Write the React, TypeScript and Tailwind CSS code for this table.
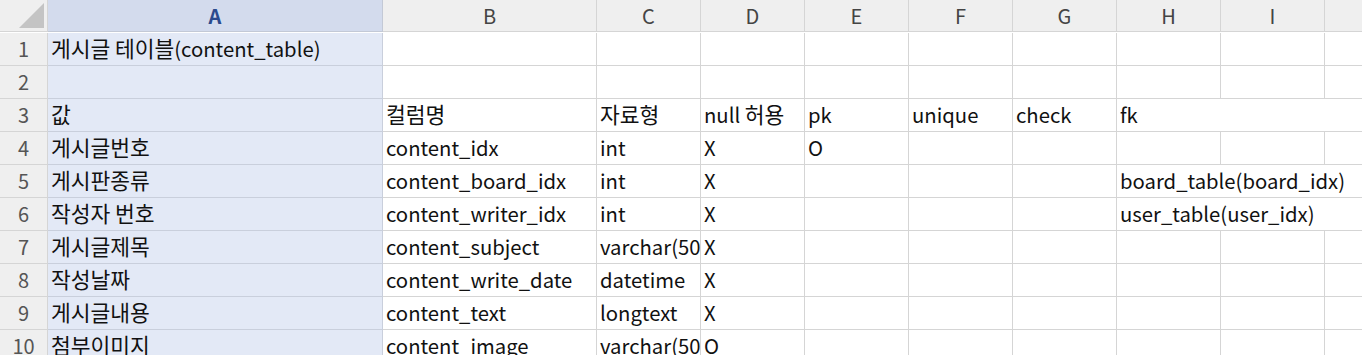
import React from "react";

type Cell = { text: string; span?: number };

const cols = ["A", "B", "C", "D", "E", "F", "G", "H", "I", "J"];

const rows: string[][] = [
  ["게시글 테이블(content_table)"],
  [],
  ["값", "컬럼명", "자료형", "null 허용", "pk", "unique", "check", "fk"],
  ["게시글번호", "content_idx", "int", "X", "O"],
  ["게시판종류", "content_board_idx", "int", "X", "", "", "", "board_table(board_idx)"],
  ["작성자 번호", "content_writer_idx", "int", "X", "", "", "", "user_table(user_idx)"],
  ["게시글제목", "content_subject", "varchar(500)", "X"],
  ["작성날짜", "content_write_date", "datetime", "X"],
  ["게시글내용", "content_text", "longtext", "X"],
  ["첨부이미지", "content_image", "varchar(500)", "O"],
];

// text that runs over the empty cells to its right (fk column)
function buildRow(r: string[]): Cell[] {
  const out: Cell[] = [];
  let i = 0;
  while (i < cols.length) {
    const text = r[i] ?? "";
    if (i === 7 && text) {
      out.push({ text, span: 3 });
      i += 3;
    } else {
      out.push({ text });
      i += 1;
    }
  }
  return out;
}

// hangul is drawn a bit larger than latin in the original sheet font
function CellText({ text }: { text: string }) {
  const parts = text.split(/([\uAC00-\uD7A3]+)/);
  return (
    <span>
      {parts.map((p, i) =>
        /[\uAC00-\uD7A3]/.test(p) ? (
          <span key={i} className="text-[21.5px]">
            {p}
          </span>
        ) : (
          p
        )
      )}
    </span>
  );
}

const font = { fontFamily: '"Noto Sans CJK KR", "Noto Sans", sans-serif' };

export default function App() {
  return (
    <div className="w-[1362px] h-[355px] overflow-hidden bg-white" style={font}>
      <div className="grid w-max grid-cols-[48px_335px_214px_repeat(8,104px)] auto-rows-[33px]">
        {/* header row */}
        <div className="h-[32px] bg-[#efefef] border-r border-b border-[#d5d5d5] relative">
          <div className="absolute left-[19px] top-[3px] w-[25px] h-[25px] bg-[#c4c4c4] [clip-path:polygon(100%_0,100%_100%,0_100%)]" />
        </div>
        {cols.map((c) =>
          c === "A" ? (
            <div
              key={c}
              className="h-[32px] bg-[#d3dbed] border-r border-b border-[#c3c9d6] flex items-center justify-center text-[20px] font-bold text-[#2b4a8d]"
            >
              {c}
            </div>
          ) : (
            <div
              key={c}
              className="h-[32px] bg-[#efefef] border-r border-b border-[#d5d5d5] flex items-center justify-center text-[20px] text-[#444]"
            >
              {c}
            </div>
          )
        )}

        {rows.map((r, ri) => (
          <React.Fragment key={ri}>
            <div className="bg-[#efefef] border-r border-b border-[#d5d5d5] flex items-center justify-center text-[20px] text-[#555]">
              {ri + 1}
            </div>
            {buildRow(r).map((cell, ci) => (
              <div
                key={ci}
                className={
                  "border-r border-b flex items-center pl-[3px] pb-[2px] whitespace-pre overflow-hidden text-[20.3px] text-[#111] leading-none " +
                  (ci === 0 ? "bg-[#e3e9f6] border-[#c9cfdc]" : "bg-white border-[#d5d5d5]") +
                  (cell.span === 3 ? " col-span-3" : "")
                }
              >
                <CellText text={cell.text} />
              </div>
            ))}
          </React.Fragment>
        ))}
      </div>
    </div>
  );
}
